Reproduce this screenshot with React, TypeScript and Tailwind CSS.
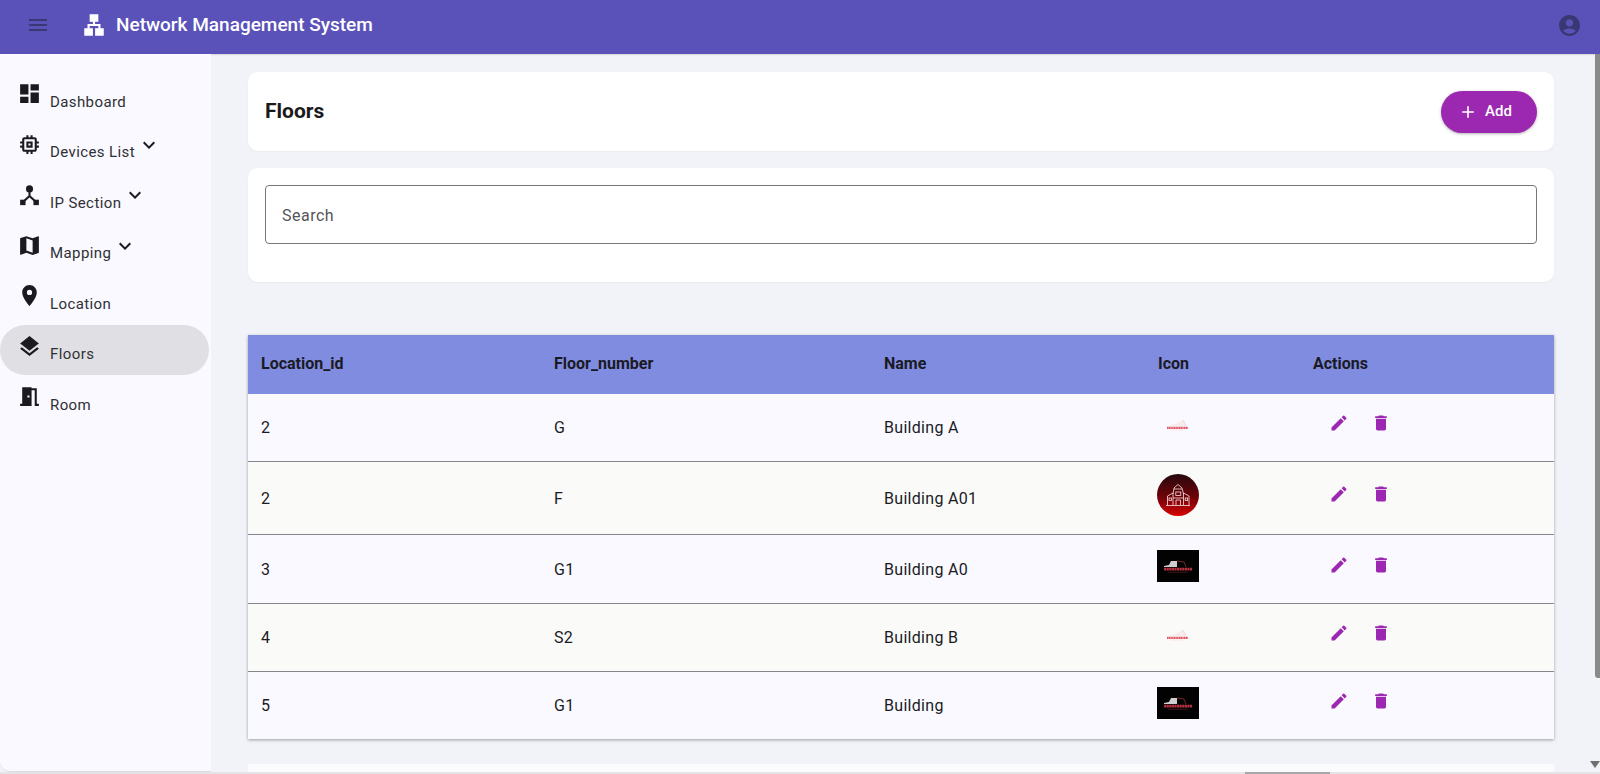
import { MdMenu, MdLan, MdAccountCircle, MdDashboard, MdMemory, MdMap, MdLocationOn, MdLayers, MdMeetingRoom, MdKeyboardArrowDown, MdAdd, MdEdit, MdDelete } from "react-icons/md";

function HubIcon({ size, className }: { size: number; className?: string }) {
  return (
    <svg width={size} height={size} viewBox="0 0 24 24" className={className} fill="currentColor">
      <circle cx="12" cy="6.6" r="3.4" />
      <path d="M12 8 V13.5 L6 19 M12 13.5 L18 19" fill="none" stroke="currentColor" strokeWidth="2" />
      <rect x="3" y="17" width="5.2" height="5.2" />
      <rect x="15.8" y="17" width="5.2" height="5.2" />
    </svg>
  );
}

const nav: { label: string; Icon: (p: { size: number; className?: string }) => React.ReactNode; chevron?: boolean; active?: boolean }[] = [
  { label: "Dashboard", Icon: MdDashboard },
  { label: "Devices List", Icon: MdMemory, chevron: true },
  { label: "IP Section", Icon: HubIcon, chevron: true },
  { label: "Mapping", Icon: MdMap, chevron: true },
  { label: "Location", Icon: MdLocationOn },
  { label: "Floors", Icon: MdLayers, active: true },
  { label: "Room", Icon: MdMeetingRoom },
];

function LogoLight() {
  return (
    <svg width="42" height="32" viewBox="0 0 42 32" className="block">
      <path d="M11 17 L18 15 L26 11 L29 17 Z" fill="#f5ecec" />
      <path d="M26 11 L29 17" stroke="#f3c6ca" strokeWidth="0.7" />
      <path d="M10 18.8 H31" stroke="#e25a6a" strokeWidth="2.2" strokeDasharray="1.4 0.3" />
      <rect x="13" y="20.6" width="14" height="0.8" fill="#f9e2e4" />
    </svg>
  );
}

function LogoDark() {
  return (
    <svg width="42" height="32" viewBox="0 0 42 32" className="block">
      <rect width="42" height="32" fill="#020202" />
      <path d="M7 16 L12 15 L14 11 L20 11 L20 17 L7 17 Z" fill="#cfcfcf" />
      <path d="M20 11 L27 12 L29 17" stroke="#a33" strokeWidth="0.7" fill="none" />
      <path d="M7 19.2 H35" stroke="#b8303f" strokeWidth="2.8" strokeDasharray="2.2 0.4" />
      <rect x="11" y="21.8" width="20" height="0.7" fill="#5a2128" />
    </svg>
  );
}

function LogoRound() {
  return (
    <svg width="42" height="42" viewBox="0 0 42 42" className="block">
      <defs>
        <linearGradient id="redfade" x1="0" y1="0" x2="0" y2="1">
          <stop offset="0" stopColor="#24090d" />
          <stop offset="0.55" stopColor="#6e0208" />
          <stop offset="1" stopColor="#d90505" />
        </linearGradient>
      </defs>
      <circle cx="21" cy="21" r="21" fill="url(#redfade)" />
      <g fill="none" stroke="#f7e4e4" strokeWidth="0.8">
        <path d="M9 31.5 H33" />
        <path d="M10.5 31 V22 L16 19 V31 M32 31 V22 L26.5 19 V31" />
        <path d="M16 20 L17 14 L21 10.5 L25 14 L26.5 20 M16 24 H26.5 M17 15 H25" />
        <path d="M19 31 V26 H23.5 V31" />
        <rect x="18.8" y="18" width="5" height="3.4" />
        <rect x="12" y="24" width="2.4" height="2.4" />
        <rect x="28.2" y="24" width="2.4" height="2.4" />
      </g>
    </svg>
  );
}

const rows = [
  { id: "2", floor: "G", name: "Building A", logo: <LogoLight />, h: "h-[67px]", lift: "mb-[4px]" },
  { id: "2", floor: "F", name: "Building A01", logo: <LogoRound />, h: "h-[73px]", lift: "mb-[5px]" },
  { id: "3", floor: "G1", name: "Building A0", logo: <LogoDark />, h: "h-[69px]", lift: "mb-[6px]" },
  { id: "4", floor: "S2", name: "Building B", logo: <LogoLight />, h: "h-[68px]", lift: "mb-[4px]" },
  { id: "5", floor: "G1", name: "Building", logo: <LogoDark />, h: "h-[68px]", lift: "mb-[5px]" },
];

export default function App() {
  return (
    <div className="relative h-[774px] w-[1600px] overflow-hidden bg-[#f1f3f8] font-['Roboto',sans-serif] text-[#1b1b1f]">
      <header className="flex h-[54px] items-center bg-[#5a52b9] pb-[4px] shadow-[0_1px_1px_rgba(0,0,0,0.1)]">
        <MdMenu size={24} className="ml-[26px] text-[#3b3773]" />
        <MdLan size={26} className="ml-[31px] text-white" />
        <h1 className="ml-[9px] pt-[1px] text-[19px] font-medium text-white">Network Management System</h1>
        <MdAccountCircle size={25} className="ml-auto mr-[18px] text-[#3b3773]" />
      </header>

      <div className="flex h-[720px]">
        <nav className="h-[718px] w-[211px] shrink-0 rounded-bl-[10px] border-b border-[#dcdcdc] bg-[#f9f9ff] pt-[18px]">
          {nav.map(({ label, Icon, chevron, active }) => (
            <div
              key={label}
              className={`flex h-[50.5px] w-[209px] items-start rounded-[25px] pl-[17px] pt-[9px] ${active ? "bg-[#e0e0e4]" : ""}`}
            >
              <Icon size={25} className="shrink-0 text-[#1b1b1f]" />
              <span className="ml-[8px] mt-[10.5px] text-[15px] leading-5 tracking-[0.4px] text-[#303034]">{label}</span>
              {chevron && <MdKeyboardArrowDown size={24} className="ml-[1.5px] mt-[1px] text-[#1b1b1f]" />}
            </div>
          ))}
        </nav>

        <main className="w-[1343px] shrink-0 pl-[37px] pt-[18px]">
          <section className="flex h-[79px] w-[1306px] items-center justify-between rounded-[10px] bg-white px-[17px] shadow-[0_1px_2px_rgba(0,0,0,0.04)]">
            <h2 className="text-[21px] font-bold text-[#1a1a1a]">Floors</h2>
            <button className="flex h-[42px] w-[96px] items-center justify-center gap-[7px] rounded-[21px] bg-[#9c27b0] pr-[8px] text-[15px] font-medium text-white shadow-[0_1px_3px_rgba(0,0,0,0.3)]">
              <MdAdd size={20} />
              Add
            </button>
          </section>

          <section className="mt-[17px] h-[114px] w-[1306px] rounded-[10px] bg-white px-[17px] pt-[17px] shadow-[0_1px_2px_rgba(0,0,0,0.04)]">
            <div className="flex h-[59px] items-center rounded-[4px] border border-[#77777a] pl-[16px] pt-[3px] text-[16px] tracking-[0.5px] text-[#55555a]">
              Search
            </div>
          </section>

          <table className="mt-[53px] w-[1306px] table-fixed border-collapse text-left text-[16px] tracking-[0.3px] shadow-[0_1px_3px_rgba(0,0,0,0.35)]">
            <colgroup>
              <col className="w-[293px]" />
              <col className="w-[330px]" />
              <col className="w-[274px]" />
              <col className="w-[155px]" />
              <col />
            </colgroup>
            <thead>
              <tr className="h-[59px] bg-[#808ce0] text-[#1a1a24]">
                {["Location_id", "Floor_number", "Name", "Icon", "Actions"].map((t) => (
                  <th key={t} className="pb-[2px] pl-[13px] font-bold tracking-normal">{t}</th>
                ))}
              </tr>
            </thead>
            <tbody>
              {rows.map((r, i) => (
                <tr key={i} className={`${r.h} border-b border-[#85858c] last:border-b-0 ${i % 2 ? "bg-[#fafaf9]" : "bg-[#f9f9ff]"}`}>
                  <td className="pl-[13px] pt-[2px]">{r.id}</td>
                  <td className="pl-[13px] pt-[2px]">{r.floor}</td>
                  <td className="pl-[13px] pt-[2px]">{r.name}</td>
                  <td className="pl-[12px]"><div className={r.lift}>{r.logo}</div></td>
                  <td className="pl-[13px]">
                    <div className="mb-[8px] ml-[16px] flex gap-[22px] text-[#9c27b0]">
                      <MdEdit size={20} />
                      <MdDelete size={20} />
                    </div>
                  </td>
                </tr>
              ))}
            </tbody>
          </table>

          <div className="mt-[25px] h-[20px] w-[1306px] bg-[#fbfbfd]" />
        </main>
      </div>

      <div className="absolute bottom-0 left-0 right-0 h-[2px] bg-[#e4e4e6]" />
      <div className="absolute bottom-0 left-[1245px] h-[2px] w-[85px] bg-[#a6a6a6]" />
      <div className="absolute right-0 top-[54px] h-[624px] w-[5px] rounded-bl-[3px] bg-[#8a8a8a]" />
      <div className="absolute bottom-[6px] right-0 h-0 w-0 border-x-[5px] border-t-[7px] border-x-transparent border-t-[#6f6f6f]" />
    </div>
  );
}
